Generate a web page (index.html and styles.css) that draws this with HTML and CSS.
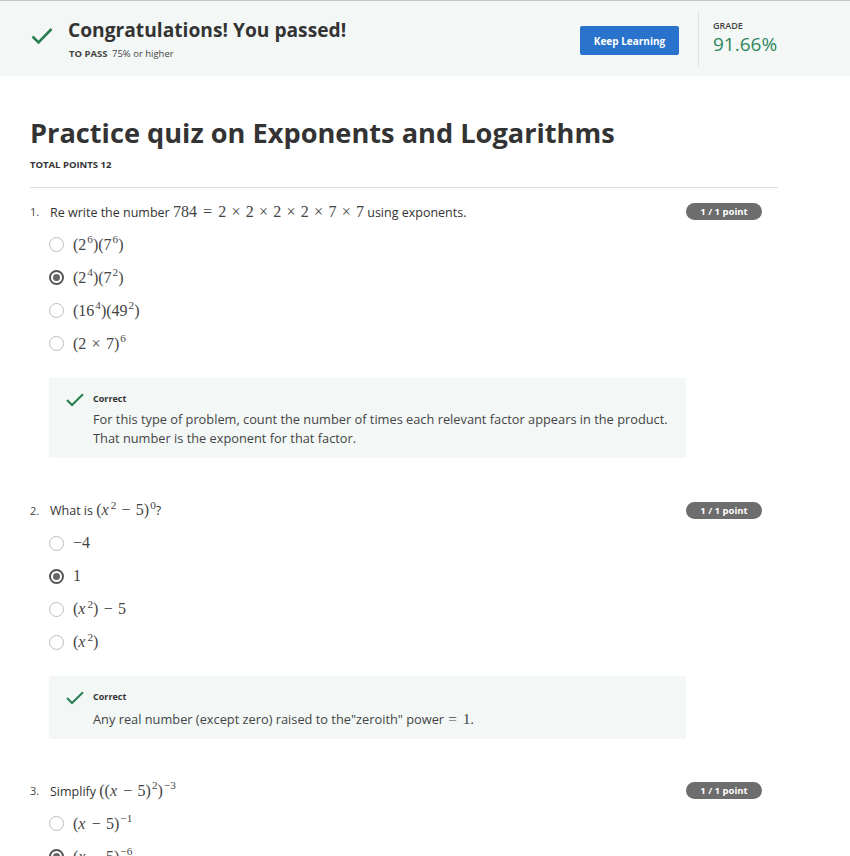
FILE: index.html
```html
<!DOCTYPE html>
<html lang="en">
<head>
<meta charset="utf-8">
<title>Practice quiz on Exponents and Logarithms</title>
<link rel="stylesheet" href="styles.css">
</head>
<body>
<header class="banner">
  <div class="banner-left">
    <svg class="banner-check" width="22" height="18" viewBox="0 0 22 18"><path d="M1.5 9.5 L7.5 15.5 L20.5 2" fill="none" stroke="#2a7f52" stroke-width="2.6"/></svg>
    <div class="banner-text">
      <h2 class="passed">Congratulations! You passed!</h2>
      <div class="topass"><b>TO PASS</b> 75% or higher</div>
    </div>
  </div>
  <button class="keep">Keep Learning</button>
  <div class="divider"></div>
  <div class="grade">
    <div class="grade-label">GRADE</div>
    <div class="grade-value">91.66%</div>
  </div>
</header>

<main class="content">
  <h1 class="title">Practice quiz on Exponents and Logarithms</h1>
  <div class="total">TOTAL POINTS 12</div>
  <hr class="rule">

  <section class="q">
    <div class="q-row">
      <span class="q-num">1.</span>
      <span class="q-text">Re write the number <span class="m">784<span class="rel">=</span>2<span class="op">×</span>2<span class="op">×</span>2<span class="op">×</span>2<span class="op">×</span>7<span class="op">×</span>7</span> using exponents.</span>
      <span class="badge">1 / 1 point</span>
    </div>
    <div class="opt"><span class="radio"></span><span class="m">(2<sup>6</sup>)(7<sup>6</sup>)</span></div>
    <div class="opt"><span class="radio on"></span><span class="m">(2<sup>4</sup>)(7<sup>2</sup>)</span></div>
    <div class="opt"><span class="radio"></span><span class="m">(16<sup>4</sup>)(49<sup>2</sup>)</span></div>
    <div class="opt"><span class="radio"></span><span class="m">(2<span class="op">×</span>7)<sup>6</sup></span></div>
    <div class="fb">
      <svg class="fb-check" width="18" height="14" viewBox="0 0 18 14"><path d="M1 7 L6 12 L17 1.2" fill="none" stroke="#2a7f52" stroke-width="2"/></svg>
      <div class="fb-body">
        <div class="fb-title">Correct</div>
        <p class="fb-text">For this type of problem, count the number of times each relevant factor appears in the product. That number is the exponent for that factor.</p>
      </div>
    </div>
  </section>

  <section class="q">
    <div class="q-row">
      <span class="q-num">2.</span>
      <span class="q-text">What is <span class="m">(<i>x</i><sup>2</sup><span class="op">−</span>5)<sup>0</sup></span>?</span>
      <span class="badge">1 / 1 point</span>
    </div>
    <div class="opt"><span class="radio"></span><span class="m">−4</span></div>
    <div class="opt"><span class="radio on"></span><span class="m">1</span></div>
    <div class="opt"><span class="radio"></span><span class="m">(<i>x</i><sup>2</sup>)<span class="op">−</span>5</span></div>
    <div class="opt"><span class="radio"></span><span class="m">(<i>x</i><sup>2</sup>)</span></div>
    <div class="fb">
      <svg class="fb-check" width="18" height="14" viewBox="0 0 18 14"><path d="M1 7 L6 12 L17 1.2" fill="none" stroke="#2a7f52" stroke-width="2"/></svg>
      <div class="fb-body">
        <div class="fb-title">Correct</div>
        <p class="fb-text">Any real number (except zero) raised to the"zeroith" power <span class="m"><span class="rel first">=</span>1</span>.</p>
      </div>
    </div>
  </section>

  <section class="q">
    <div class="q-row">
      <span class="q-num">3.</span>
      <span class="q-text">Simplify <span class="m">((<i>x</i><span class="op">−</span>5)<sup>2</sup>)<sup>−3</sup></span></span>
      <span class="badge">1 / 1 point</span>
    </div>
    <div class="opt"><span class="radio"></span><span class="m">(<i>x</i><span class="op">−</span>5)<sup>−1</sup></span></div>
    <div class="opt"><span class="radio on"></span><span class="m">(<i>x</i><span class="op">−</span>5)<sup>−6</sup></span></div>
  </section>
</main>
</body>
</html>
```

FILE: styles.css
```css
* { box-sizing: border-box; }
html, body { margin: 0; padding: 0; }
body {
  font-family: "Open Sans", "Liberation Sans", sans-serif;
  color: #333;
  background: #fff;
  overflow: hidden;
}

.banner {
  display: flex;
  align-items: center;
  height: 76px;
  background: #f3f8f7;
  border-top: 1px solid #c4c6c6;
  padding-left: 31px;
}
.banner-left {
  flex: 1;
  display: flex;
  align-items: flex-start;
}
.banner-check { margin-top: 9px; margin-right: 15px; }
.passed {
  margin: 0;
  font-size: 19.2px;
  line-height: 24px;
  font-weight: 700;
  color: #333;
  margin-top: 0;
}
.topass {
  font-size: 9.5px;
  color: #444;
  margin-top: 5px;
  margin-left: 1px;
}
.topass b { font-weight: 700; margin-right: 2px; }

.keep {
  width: 99px;
  height: 29px;
  background: #2a73cc;
  color: #fff;
  border: none;
  border-radius: 2px;
  font-family: inherit;
  font-size: 10px;
  font-weight: 700;
  margin-top: 4px;
  padding: 0;
}
.divider {
  width: 1px;
  height: 54px;
  background: #dde2e1;
  margin: 1px 14px 0 19px;
}
.grade { width: 137px; margin-top: -1px; }
.grade-label {
  font-size: 9px;
  font-weight: 600;
  color: #444;
  line-height: 12px;
}
.grade-value {
  font-size: 19px;
  color: #2e855a;
  line-height: 24px;
  margin-top: 0;
}

.content {
  padding: 0 72px 0 30px;
}
.title {
  margin: 40px 0 0;
  font-size: 27.2px;
  line-height: 34px;
  font-weight: 700;
  color: #333;
}
.total {
  font-size: 9.5px;
  font-weight: 700;
  color: #333;
  margin-top: 8px;
  line-height: 14px;
}
.rule {
  border: none;
  border-top: 1px solid #dcdcdc;
  margin: 15px 0 7px;
}

.m {
  font-family: "Liberation Serif", "DejaVu Serif", serif;
  font-size: 16px;
  color: #444;
}
.m i { font-style: italic; margin-right: 1px; }
.m sup {
  font-size: 0.7em;
  line-height: 0;
  vertical-align: 0.55em;
  margin-left: 1px;
}
.op { margin: 0 0.33em; }
.rel { margin: 0 0.38em; }
.rel.first { margin-left: 0.05em; }

.q { padding-right: 16px; margin-bottom: 35.5px; }
.q-row {
  display: flex;
  align-items: center;
  height: 33px;
}
.q-num {
  width: 20px;
  font-size: 11px;
  color: #444;
}
.q-text {
  flex: 1;
  font-size: 12.5px;
  color: #333;
}
.badge {
  width: 76px;
  height: 17px;
  border-radius: 9px;
  background: #6d6d6d;
  color: #fff;
  font-size: 9.5px;
  font-weight: 700;
  display: flex;
  align-items: center;
  justify-content: center;
}

.opt {
  display: flex;
  align-items: center;
  height: 33px;
  padding-left: 19px;
}
.radio {
  width: 15px;
  height: 15px;
  border-radius: 50%;
  border: 1.5px solid #bdbdbd;
  margin-right: 9px;
  display: flex;
  align-items: center;
  justify-content: center;
  background: #fff;
}
.radio.on { border: 2px solid #555; }
.radio.on::after {
  content: "";
  width: 7px;
  height: 7px;
  border-radius: 50%;
  background: #666;
}

.fb {
  display: flex;
  align-items: flex-start;
  width: 637px;
  margin: 17.5px 0 0 19px;
  background: #f3f8f7;
  padding: 14px 16px 10px 17px;
}
.fb-check { margin-top: 1px; margin-right: 9px; flex: none; }
.fb-title {
  font-size: 9px;
  font-weight: 700;
  color: #333;
  line-height: 14px;
}
.fb-text {
  margin: 4.5px 0 0;
  font-size: 12.8px;
  line-height: 19px;
  color: #444;
}
.fb-text .m { font-size: 15.5px; color: #444; }
```
